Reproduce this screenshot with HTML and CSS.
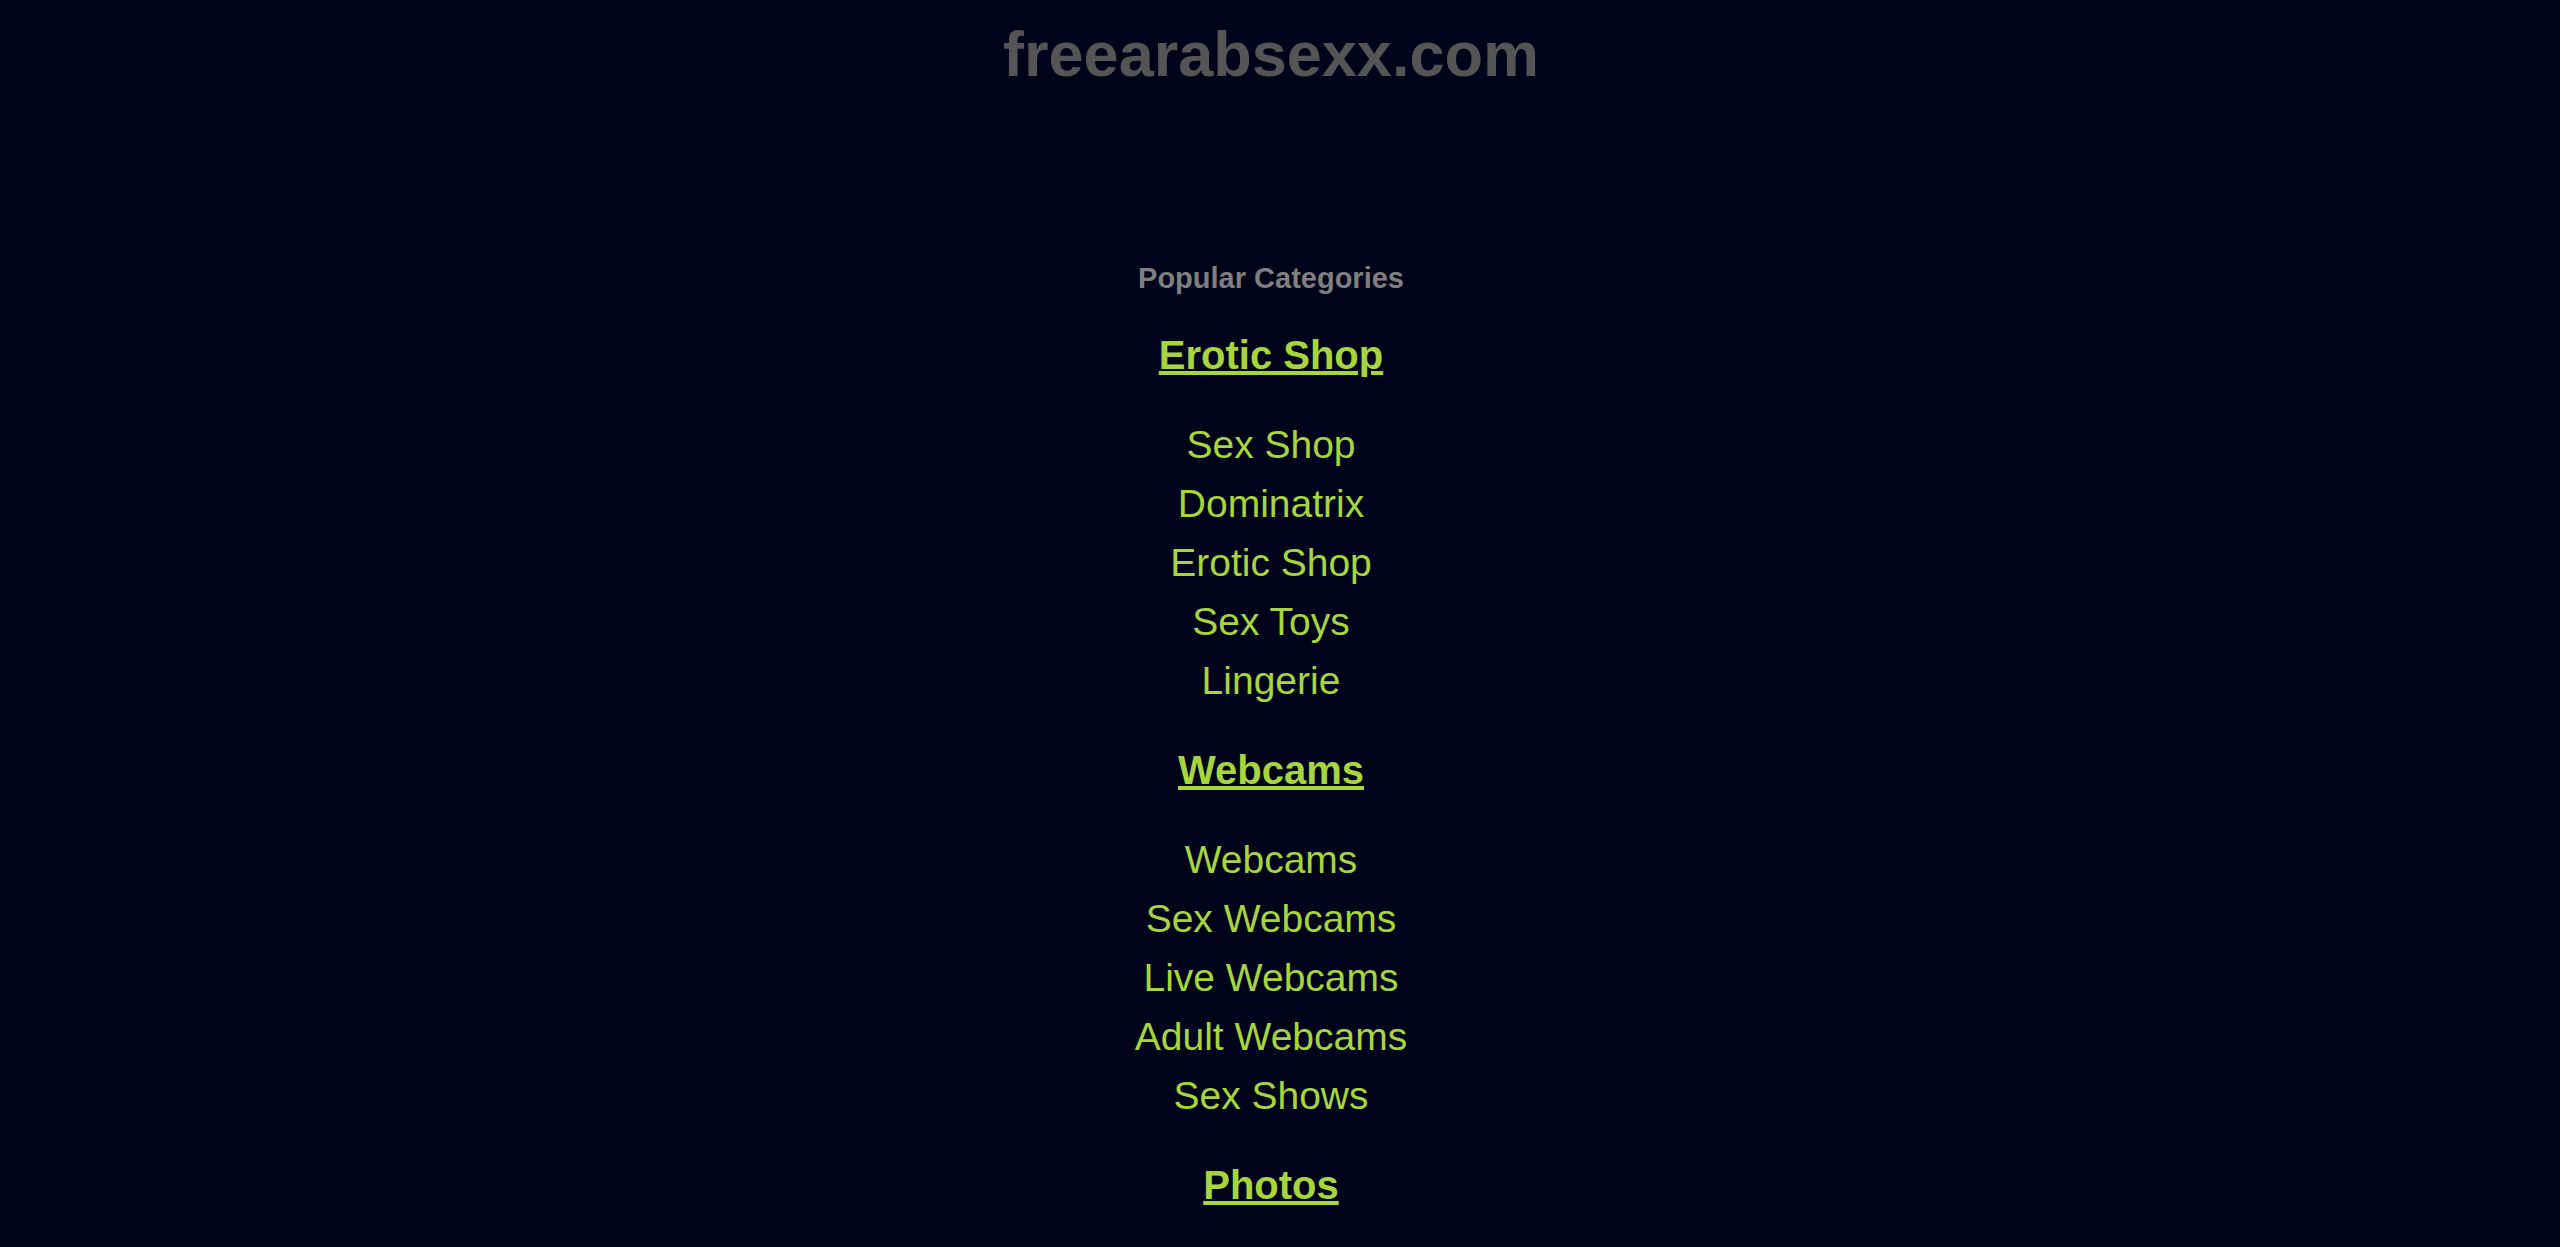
FILE: index.html
```html
<!DOCTYPE html>
<html lang="en">
<head>
<meta charset="utf-8">
<title>freearabsexx.com</title>
<link rel="stylesheet" href="styles.css">
</head>
<body>
<div class="page">
  <header class="site-header">
    <h1 class="site-title">freearabsexx.com</h1>
  </header>
  <main class="categories">
    <h2 class="categories-title">Popular Categories</h2>
    <section class="group">
      <h3 class="group-title"><a href="#">Erotic Shop</a></h3>
      <ul class="group-list">
        <li><a href="#">Sex Shop</a></li>
        <li><a href="#">Dominatrix</a></li>
        <li><a href="#">Erotic Shop</a></li>
        <li><a href="#">Sex Toys</a></li>
        <li><a href="#">Lingerie</a></li>
      </ul>
    </section>
    <section class="group">
      <h3 class="group-title"><a href="#">Webcams</a></h3>
      <ul class="group-list">
        <li><a href="#">Webcams</a></li>
        <li><a href="#">Sex Webcams</a></li>
        <li><a href="#">Live Webcams</a></li>
        <li><a href="#">Adult Webcams</a></li>
        <li><a href="#">Sex Shows</a></li>
      </ul>
    </section>
    <section class="group">
      <h3 class="group-title"><a href="#">Photos</a></h3>
    </section>
  </main>
</div>
</body>
</html>
```

FILE: styles.css
```css
html, body {
  margin: 0;
  padding: 0;
  background: #00041b;
}

body {
  font-family: "Liberation Sans", Arial, Helvetica, sans-serif;
  text-align: center;
}

.page {
  padding-right: 18px;
}

.site-header {
  padding-top: 18px;
}

.site-title {
  margin: 0;
  font-size: 63px;
  line-height: 72px;
  font-weight: bold;
  color: #555555;
}

.categories {
  padding-top: 171px;
}

.categories-title {
  margin: 0;
  font-size: 29px;
  line-height: 34px;
  font-weight: bold;
  color: #7f7f7f;
}

.group-title {
  margin: 36px 0;
  font-size: 40px;
  line-height: 48px;
  font-weight: bold;
}

.group-title a {
  color: #a6d53d;
  text-decoration: underline;
}

.group-list {
  list-style: none;
  margin: 0;
  padding: 0;
}

.group-list li {
  font-size: 39px;
  line-height: 59px;
}

.group-list a {
  color: #a6d53d;
  text-decoration: none;
}
```
